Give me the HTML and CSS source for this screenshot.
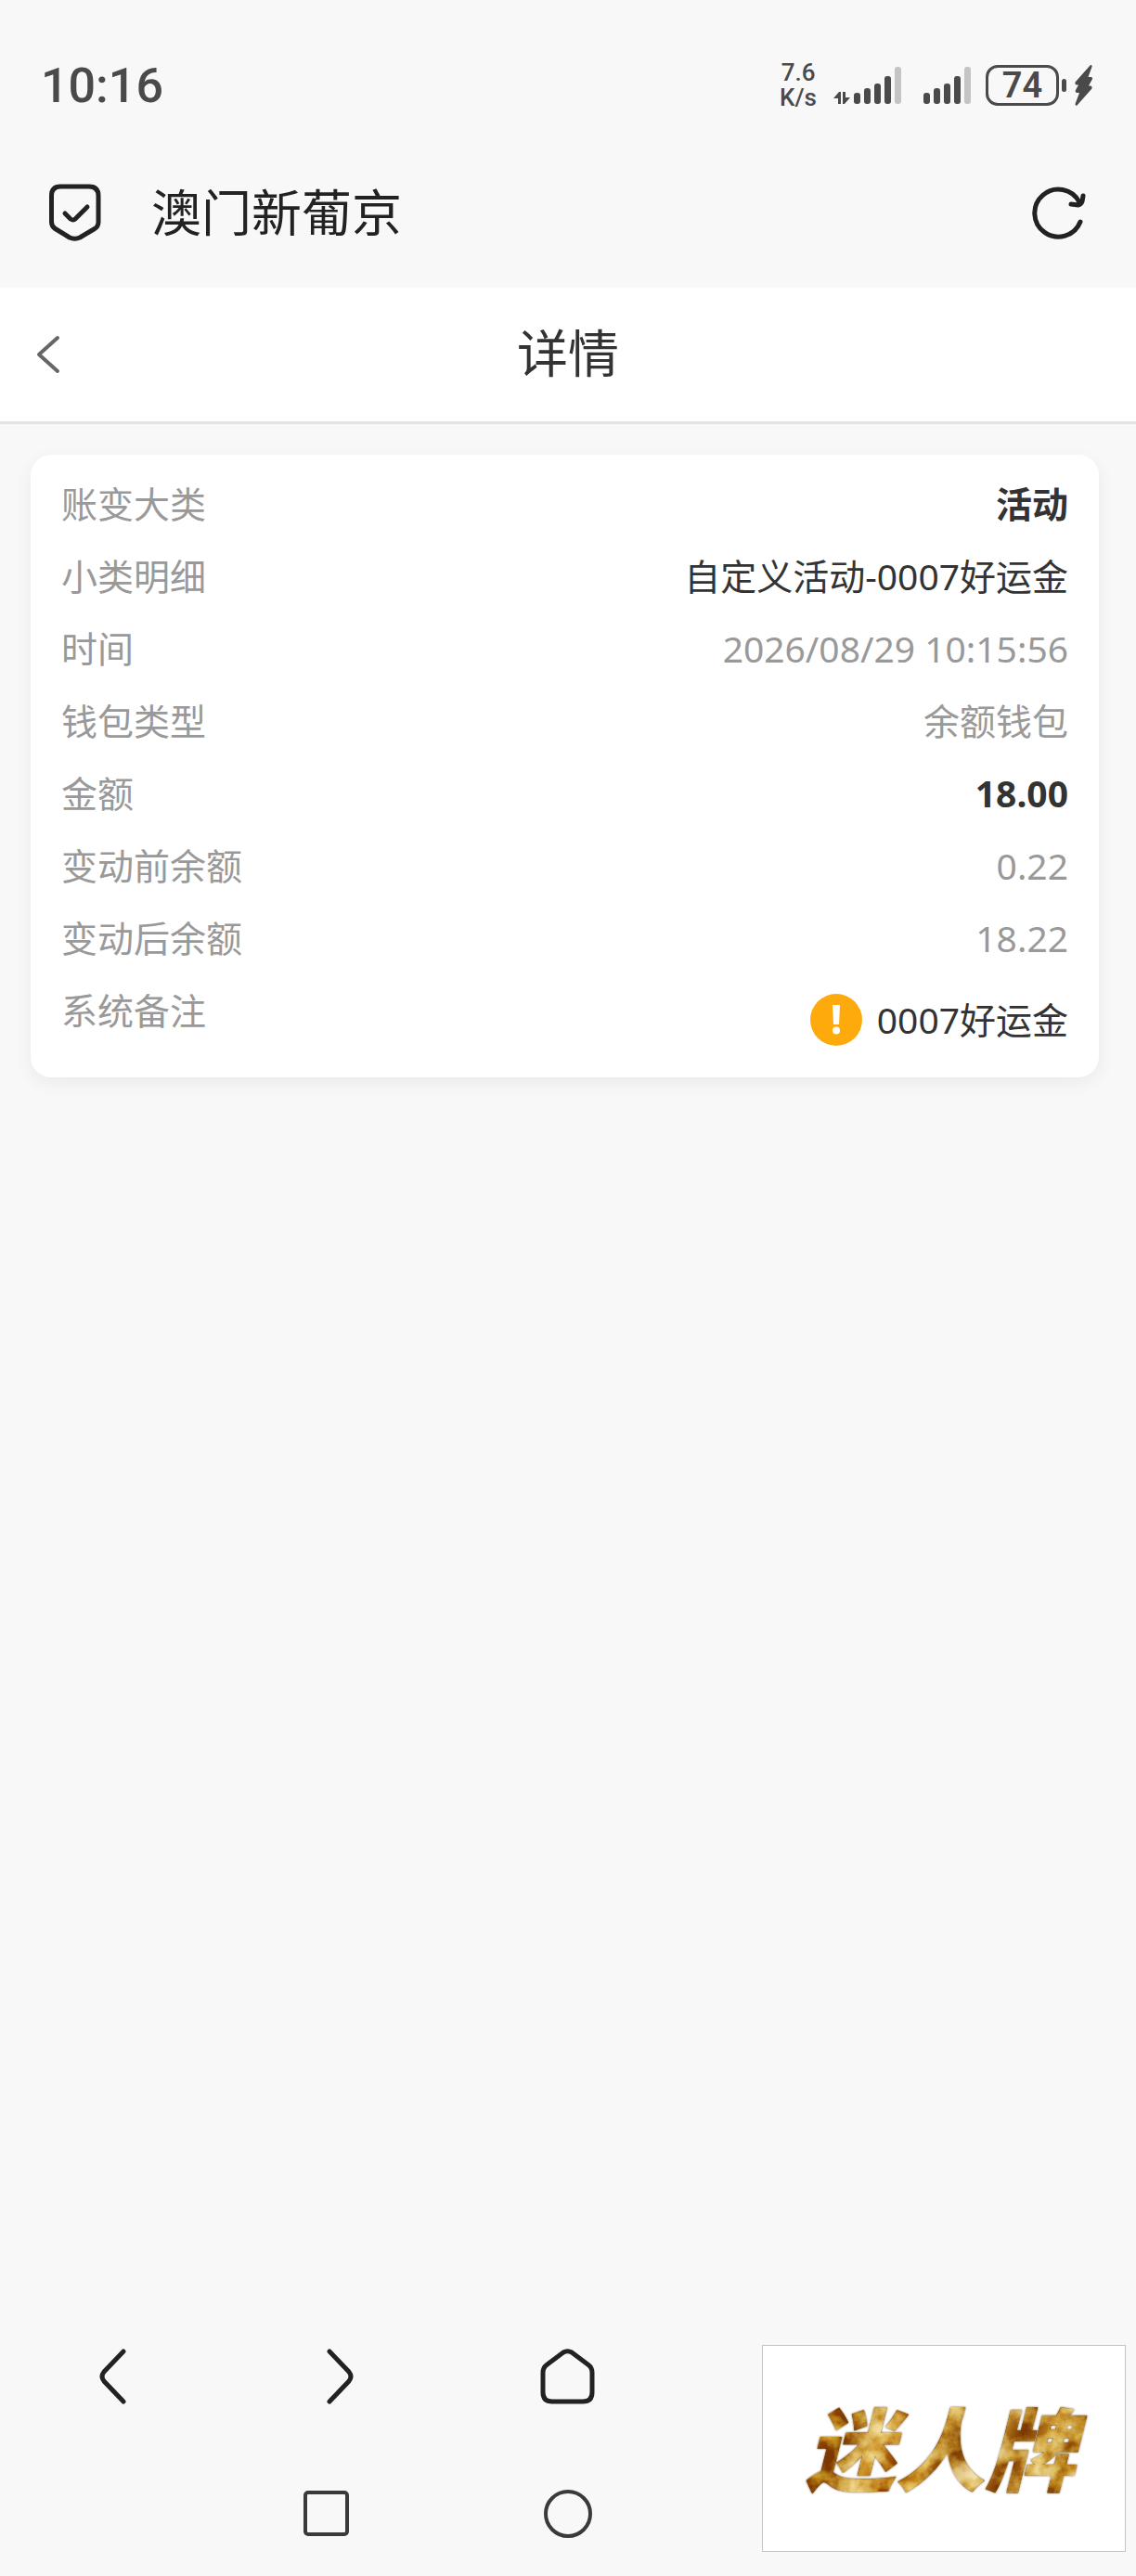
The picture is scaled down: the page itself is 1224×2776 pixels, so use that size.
FILE: index.html
```html
<!doctype html>
<html lang="zh-CN">
  <head>
    <meta charset="UTF-8" />
    <meta name="viewport" content="width=device-width, initial-scale=1.0" />
    <title>详情</title>
    <link rel="stylesheet" href="styles.css">
  </head>
  <body>
    <div class="status-bar">
      <span class="clock">10:16</span>
      <div class="status-icons">
        <div class="net-speed">
          <span>7.6</span>
          <span>K/s</span>
        </div>
        <svg class="signal" width="74" height="44" viewBox="0 0 74 44" fill="#4a4a4a">
          <path d="M0 36L6 29H8V42H5V36Z" />
          <path d="M10 29H13V35H18L12 42H10Z" />
          <rect x="22" y="30" width="7" height="12" rx="3" />
          <rect x="33" y="25" width="7" height="17" rx="3" />
          <rect x="44" y="20" width="7" height="22" rx="3" />
          <rect x="55" y="12" width="7" height="30" rx="3" />
          <rect x="66" y="2" width="7" height="40" rx="3" fill="#c4c4c4" />
        </svg>
        <svg class="signal-second" width="52" height="44" viewBox="0 0 52 44" fill="#4a4a4a">
          <rect x="0" y="30" width="7" height="12" rx="3" />
          <rect x="11" y="25" width="7" height="17" rx="3" />
          <rect x="22" y="20" width="7" height="22" rx="3" />
          <rect x="33" y="12" width="7" height="30" rx="3" />
          <rect x="44" y="2" width="7" height="40" rx="3" fill="#c4c4c4" />
        </svg>
        <span class="battery">74</span>
        <span class="battery-tip"></span>
        <svg width="20" height="44" viewBox="0 0 20 44" fill="#4a4a4a">
          <path d="M17 0Q19 0 18.500 2L14.500 13H18Q20 14 18.500 16L15 22.500H17.500Q19.500 24 18 26L2.500 43.500Q.5 44.500 .5 42L5 30H2Q0 29 1 27L4 21.500H1.500Q-.5 20 1 18Z" />
        </svg>
      </div>
    </div>

    <div class="address-bar">
      <svg width="56" height="62" viewBox="0 0 56 62" fill="none" stroke="#222" stroke-width="5" stroke-linecap="round" stroke-linejoin="round">
        <path d="M12 3H43Q53 3 53 13V41Q53 46 49 48.500L33 58Q27.500 60.500 22 58L6.500 48.500Q2.500 46 2.500 41V13Q2.500 3 12 3Z" />
        <path d="M17 32L23 38Q26 40 28 38L41 25" />
      </svg>
      <span class="site-name">澳门新葡京</span>
      <button type="button" class="icon-button" aria-label="刷新">
        <svg width="58" height="58" viewBox="0 0 58 58" fill="none" stroke="#222" stroke-width="5" stroke-linecap="round" stroke-linejoin="round">
          <path d="M52 39A25.500 25.500 0 1 1 51 18" />
          <path d="M42 20L50 21Q53 20 54 17L55 11" />
        </svg>
      </button>
    </div>

    <header class="page-header">
      <button type="button" class="icon-button" aria-label="返回">
        <svg width="26" height="42" viewBox="0 0 26 42" fill="none" stroke="#666" stroke-width="4" stroke-linecap="round" stroke-linejoin="round">
          <path d="M23 3L3 21L23 39" />
        </svg>
      </button>
      <h1>详情</h1>
    </header>

    <main>
      <dl class="detail-card">
        <div class="detail-row">
          <dt>账变大类</dt>
          <dd class="strong">活动</dd>
        </div>
        <div class="detail-row">
          <dt>小类明细</dt>
          <dd class="dark">自定义活动-0007好运金</dd>
        </div>
        <div class="detail-row">
          <dt>时间</dt>
          <dd>2026/08/29 10:15:56</dd>
        </div>
        <div class="detail-row">
          <dt>钱包类型</dt>
          <dd>余额钱包</dd>
        </div>
        <div class="detail-row">
          <dt>金额</dt>
          <dd class="strong">18.00</dd>
        </div>
        <div class="detail-row">
          <dt>变动前余额</dt>
          <dd>0.22</dd>
        </div>
        <div class="detail-row">
          <dt>变动后余额</dt>
          <dd>18.22</dd>
        </div>
        <div class="detail-row">
          <dt>系统备注</dt>
          <dd class="dark remark">
            <svg width="56" height="56" viewBox="0 0 56 56">
              <circle cx="28" cy="28" r="28" fill="#ffaa0c" />
              <path d="M24 12H32L31 33H25Z" fill="#fff" />
              <circle cx="28" cy="39.500" r="4" fill="#fff" />
            </svg>
            0007好运金
          </dd>
        </div>
      </dl>
    </main>

    <nav class="toolbar">
      <button type="button" class="icon-button" aria-label="后退">
        <svg width="60" height="60" viewBox="0 0 60 60" fill="none" stroke="#222" stroke-width="5" stroke-linecap="round">
          <path d="M41 3L20 25Q16 30 20 35L41 57" />
        </svg>
      </button>
      <button type="button" class="icon-button" aria-label="前进">
        <svg width="60" height="60" viewBox="0 0 60 60" fill="none" stroke="#222" stroke-width="5" stroke-linecap="round">
          <path d="M18 3L39 25Q43 30 39 35L18 57" />
        </svg>
      </button>
      <button type="button" class="icon-button" aria-label="主页">
        <svg width="60" height="60" viewBox="0 0 60 60" fill="none" stroke="#222" stroke-width="5" stroke-linejoin="round">
          <path d="M25 4Q29.500 1.500 34 4L52 17.500Q56 20.500 56 26V47Q56 57 46 57H13Q3 57 3 47V26Q3 20.500 7 17.500Z" />
        </svg>
      </button>
    </nav>

    <nav class="system-nav">
      <button type="button" class="icon-button" aria-label="最近任务">
        <svg width="54" height="54" viewBox="0 0 54 54" fill="none" stroke="#3a3a3a" stroke-width="4">
          <rect x="4" y="4" width="45" height="45" rx="3" />
        </svg>
      </button>
      <button type="button" class="icon-button" aria-label="主屏幕">
        <svg width="54" height="54" viewBox="0 0 54 54" fill="none" stroke="#3a3a3a" stroke-width="4">
          <circle cx="27" cy="27" r="24" />
        </svg>
      </button>
    </nav>

    <div class="brand-badge">
      <!-- mottled gold foil over the lettering -->
      <svg width="0" height="0" aria-hidden="true">
        <filter id="foil" color-interpolation-filters="sRGB">
          <feTurbulence type="fractalNoise" baseFrequency="0.045" numOctaves="4" seed="8" result="noise" />
          <feColorMatrix in="noise" type="matrix" values="2.4 0 0 0 -0.8  2.4 0 0 0 -0.8  2.4 0 0 0 -0.8  0 0 0 0 1" result="grain" />
          <feBlend in="grain" in2="SourceGraphic" mode="soft-light" result="mix" />
          <feComposite in="mix" in2="SourceGraphic" operator="in" />
        </filter>
      </svg>
      <span>迷人牌</span>
    </div>
  </body>
</html>
```
FILE: styles.css
```css
* {
  box-sizing: border-box;
}

body {
  margin: 0;
  min-height: 100vh;
  display: flex;
  flex-direction: column;
  background-color: #f8f8f8;
  color: #333;
  font-family: "Noto Sans", "Noto Sans CJK SC", sans-serif;
}

svg {
  display: block;
  flex-shrink: 0;
}

.icon-button {
  display: flex;
  align-items: center;
  justify-content: center;
  padding: 0;
  border: none;
  background: none;
  cursor: pointer;
}

/* Phone status bar */
.status-bar {
  display: flex;
  align-items: center;
  justify-content: space-between;
  height: 148px;
  padding: 36px 46px 0 44px;
  color: #4a4a4a;
  font-family: Roboto, sans-serif;
}

.clock {
  font-size: 52px;
  font-weight: 500;
}

.status-icons {
  display: flex;
  align-items: center;
}

.net-speed {
  display: flex;
  flex-direction: column;
  align-items: center;
  margin-right: 18px;
  font-size: 26px;
  font-weight: 500;
  line-height: 27px;
}

.signal {
  margin-right: 23px;
}

.signal-second {
  margin-right: 15px;
}

.battery {
  display: flex;
  align-items: center;
  justify-content: center;
  width: 79px;
  height: 44px;
  border: 3px solid #4a4a4a;
  border-radius: 13px;
  font-size: 38px;
  font-weight: 600;
}

.battery-tip {
  width: 5px;
  height: 14px;
  margin: 0 9px 0 3px;
  border-radius: 3px;
  background-color: #4a4a4a;
}

/* Browser address bar */
.address-bar {
  display: flex;
  align-items: center;
  height: 162px;
  padding: 0 54px 0 53px;
}

.site-name {
  flex: 1;
  margin-left: 54px;
  color: #222;
  font-size: 54px;
  line-height: 64px;
}

/* Page header */
.page-header {
  display: grid;
  grid-template-columns: 1fr auto 1fr;
  align-items: center;
  height: 147px;
  padding: 0 39px;
  border-bottom: 3px solid #e3e3e3;
  background-color: #fff;
}

.page-header .icon-button {
  justify-self: start;
}

.page-header h1 {
  margin: 0 0 4px;
  font-size: 55px;
  font-weight: 400;
  line-height: 64px;
}

/* Detail card */
main {
  flex: 1;
  padding: 33px 40px 33px 33px;
}

.detail-card {
  margin: 0;
  padding: 14px 33px;
  border-radius: 22px;
  background-color: #fff;
  box-shadow: 0 6px 20px rgba(0, 0, 0, 0.06);
  font-size: 39px;
  line-height: 78px;
}

.detail-row {
  display: flex;
  justify-content: space-between;
  color: #999;
}

.detail-row dd {
  margin: 0;
  text-align: right;
}

.detail-row .dark {
  color: #333;
}

.detail-row .strong {
  color: #333;
  font-weight: 700;
}

.detail-row .remark {
  display: flex;
  align-items: center;
  gap: 16px;
  height: 97px;
}

/* Browser toolbar and system buttons */
.toolbar {
  display: grid;
  grid-template-columns: repeat(5, 1fr);
  height: 162px;
}

.system-nav {
  display: grid;
  grid-template-columns: repeat(3, 260px);
  justify-content: center;
  height: 134px;
}

/* Floating badge over the bottom bars */
.brand-badge {
  position: fixed;
  right: 11px;
  bottom: 26px;
  display: flex;
  align-items: center;
  justify-content: center;
  width: 392px;
  height: 223px;
  border: 1px solid #c4c4c4;
  background-color: #fff;
}

.brand-badge span {
  padding: 0 16px 8px 8px;
  background-image: linear-gradient(115deg, #a0690c 0%, #c08418 12%, #b07610 20%, #e6c468 30%, #c08014 38%, #e0b850 46%, #a86c10 53%, #ecd080 62%, #b07614 70%, #e0bc5c 78%, #b88018 86%, #dcae48 93%, #986210 100%);
  background-clip: text;
  -webkit-background-clip: text;
  color: transparent;
  font-family: "Noto Sans CJK SC", sans-serif;
  font-size: 97px;
  font-style: italic;
  font-weight: 900;
  line-height: 140px;
  filter: url(#foil) drop-shadow(0 0 1px #7a4a08);
}
```
